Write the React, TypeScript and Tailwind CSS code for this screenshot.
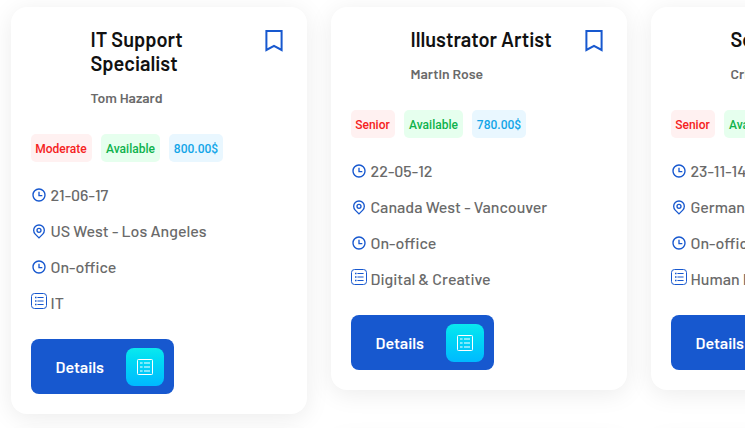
import React from "react";

type Job = {
  title: string;
  person: string;
  level: string;
  price: string;
  date: string;
  place: string;
  field: string;
};

const jobs: Job[] = [
  {
    title: "IT Support Specialist",
    person: "Tom Hazard",
    level: "Moderate",
    price: "800.00$",
    date: "21-06-17",
    place: "US West - Los Angeles",
    field: "IT",
  },
  {
    title: "Illustrator Artist",
    person: "Martin Rose",
    level: "Senior",
    price: "780.00$",
    date: "22-05-12",
    place: "Canada West - Vancouver",
    field: "Digital & Creative",
  },
  {
    title: "Software",
    person: "Cris Miller",
    level: "Senior",
    price: "900.00$",
    date: "23-11-14",
    place: "Germany",
    field: "Human Resources",
  },
];

function BookmarkIcon() {
  return (
    <svg className="h-[22px] w-[18px] shrink-0" viewBox="0 0 18 22" fill="none" stroke="#1758cf" strokeWidth="2">
      <path d="M1.4 1H16.6V20L9 15.8L1.4 20Z" />
    </svg>
  );
}

function ClockIcon() {
  return (
    <svg className="size-4 shrink-0" viewBox="0 0 24 24" fill="#1758cf">
      <path d="M12 22C6.477 22 2 17.523 2 12S6.477 2 12 2s10 4.477 10 10-4.477 10-10 10zm0-2a8 8 0 1 0 0-16 8 8 0 0 0 0 16zm1-8h4v2h-6V7h2v5z" />
    </svg>
  );
}

function PinIcon() {
  return (
    <svg className="size-4 shrink-0" viewBox="0 0 24 24" fill="#1758cf">
      <path d="M12 23.728l-6.364-6.364a9 9 0 1 1 12.728 0L12 23.728zm4.95-7.778a7 7 0 1 0-9.9 0L12 20.9l4.95-4.95zM12 15a4 4 0 1 1 0-8 4 4 0 0 1 0 8zm0-2a2 2 0 1 0 0-4 2 2 0 0 0 0 4z" />
    </svg>
  );
}

function ListIcon() {
  return (
    <svg className="size-4 shrink-0 -translate-y-[2px]" viewBox="0 0 16 16" fill="none" stroke="#1758cf">
      <rect x=".5" y=".5" width="15" height="15" rx="3" />
      <path d="M6.8 4.5h5.4M6.8 8h5.4M6.8 11.5h5.4" strokeLinecap="round" />
      <path d="M4 4.5h1.5M4 8h1.5M4 11.5h1.5" strokeWidth="1.5" />
    </svg>
  );
}

function SheetIcon() {
  return (
    <svg className="size-4" viewBox="0 0 16 16" fill="none" stroke="#fff">
      <rect x=".5" y=".5" width="15" height="15" rx=".8" />
      <path d="M3 4h2.6M7 4h6M3 8h2.6M7 8h6M3 12h2.6M7 12h6" strokeWidth="1.2" />
    </svg>
  );
}

function InfoRow({ icon, text }: { icon: React.ReactNode; text: string }) {
  return (
    <li className="flex h-6 items-center gap-[3.5px]">
      {icon}
      <span className="whitespace-nowrap">{text}</span>
    </li>
  );
}

function JobCard({ job }: { job: Job }) {
  return (
    <article className="rounded-2xl bg-white p-5 shadow-[0_4px_24px_rgba(0,0,0,0.08)]">
      <header className="flex items-start justify-between pr-1">
        <div className="w-[210px] pl-[59.5px]">
          <h2 className="text-[20px] font-semibold leading-6 text-[#111]">{job.title}</h2>
          <p className="mt-[13px] text-[14px] font-semibold leading-5 text-[#6a6a6a]">{job.person}</p>
        </div>
        <div className="pt-[3px]">
          <BookmarkIcon />
        </div>
      </header>
      <div className="mt-[26px] flex gap-[9px] font-['Roboto',sans-serif] text-[12px] font-medium *:flex *:h-7 *:items-center *:justify-center *:rounded-[5px] *:pt-[2px]">
        <span className={`bg-[#fff1f1] text-[#f52222] ${job.level === "Moderate" ? "w-[61px] pr-px" : "w-11 pr-px"}`}>{job.level}</span>
        <span className="w-[59px] bg-[#e6ffee] text-[#0eb24c]">Available</span>
        <span className="w-[54px] bg-[#e9f7ff] text-[#12a5e8]">{job.price}</span>
      </div>
      <ul className="mt-[21px] flex flex-col gap-3 text-[16px] font-medium leading-6 text-[#6a6a6a]">
        <InfoRow icon={<ClockIcon />} text={job.date} />
        <InfoRow icon={<PinIcon />} text={job.place} />
        <InfoRow icon={<ClockIcon />} text="On-office" />
        <InfoRow icon={<ListIcon />} text={job.field} />
      </ul>
      <button className="mt-6 flex h-[55px] w-[143px] items-center justify-between rounded-lg bg-[#1758cf] pl-[24.5px] pr-[10px] text-[16px] font-semibold text-white">
        <span>Details</span>
        <span className="flex size-[38px] items-center justify-center rounded-lg bg-linear-to-b from-[#0be9ee] to-[#00b9ff]">
          <SheetIcon />
        </span>
      </button>
    </article>
  );
}

export default function App() {
  return (
    <main className="h-[428px] w-full overflow-hidden bg-white pl-[11px] pt-[7px] font-['Barlow','Roboto',sans-serif]">
      <div className="grid w-[936px] grid-cols-3 items-start gap-6">
        {jobs.map((job) => (
          <JobCard key={job.title} job={job} />
        ))}
        {jobs.map((job) => (
          <div key={job.title} className="h-96 rounded-2xl bg-white shadow-[0_4px_24px_rgba(0,0,0,0.08)]" />
        ))}
      </div>
    </main>
  );
}
